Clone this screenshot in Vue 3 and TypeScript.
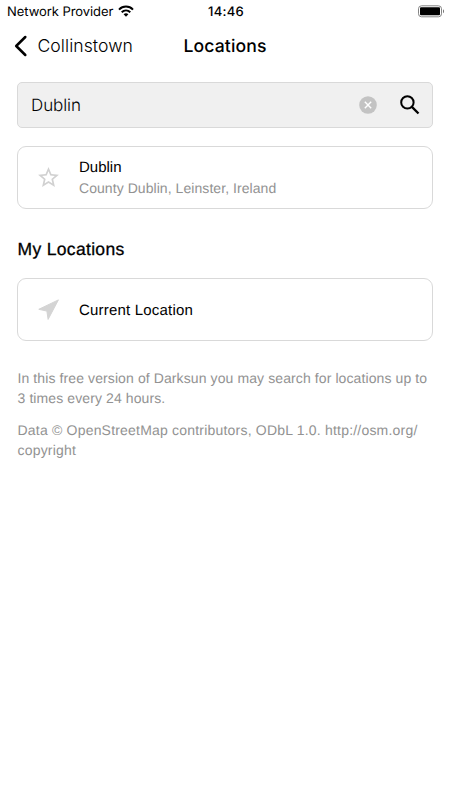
<script setup lang="ts">
import { ref } from 'vue'

interface Place {
  name: string
  region: string
}

const query = ref('Dublin')
const results: Place[] = [{ name: 'Dublin', region: 'County Dublin, Leinster, Ireland' }]
</script>

<template>
  <main class="screen">
    <div class="status">
      <div class="carrier">
        <span class="provider">Network Provider</span>
        <svg class="wifi" viewBox="0 0 16 12" width="16" height="12">
          <path d="M1 4.6C4.9.6 11.1.6 15 4.6M3.7 7.2c2.5-2.4 6.1-2.4 8.6 0" fill="none" stroke="#000" stroke-width="2" />
          <path d="M5.6 9.3c1.4-1.3 3.4-1.3 4.8 0L8 11.7z" />
        </svg>
      </div>
      <span class="clock">14:46</span>
      <svg class="battery" viewBox="0 0 27 13" width="27" height="13">
        <rect x=".5" y=".8" width="23" height="11" rx="3" fill="none" stroke="#858585" />
        <rect x="2" y="2.3" width="20" height="8" rx="1" />
        <path d="M25 4.3c1.4.7 1.4 3.3 0 4z" fill="#777" />
      </svg>
    </div>

    <header class="nav">
      <button class="back" type="button">
        <svg viewBox="0 0 14 22" width="14" height="22">
          <path d="M11.3 2 2.2 11l9.1 9" fill="none" stroke="#000" stroke-width="2.5" stroke-linecap="round" stroke-linejoin="round" />
        </svg>
        <span class="back-label">Collinstown</span>
      </button>
      <h1><span>Locations</span></h1>
    </header>

    <div class="search">
      <span class="query">{{ query }}</span>
      <svg class="clear" viewBox="0 0 18 18" width="18" height="18">
        <circle cx="9" cy="9" r="8.8" fill="#c3c3c3" />
        <path d="m5.8 5.8 6.4 6.4m0-6.4-6.4 6.4" stroke="#fff" stroke-width="1.4" />
      </svg>
      <svg class="find" viewBox="0 0 20 20" width="20" height="20">
        <circle cx="7.4" cy="7.4" r="6.2" fill="none" stroke="#000" stroke-width="2" />
        <path d="m11.9 11.9 6.6 6.6" stroke="#000" stroke-width="2.3" />
      </svg>
    </div>

    <article v-for="place in results" :key="place.region" class="card result">
      <svg class="icon" viewBox="0 0 24 24" width="25" height="25">
        <path fill="#d1d1d1" d="m22 9.24-7.19-.62L12 2 9.19 8.63 2 9.24l5.46 4.73L5.82 21 12 17.27 18.18 21l-1.63-7.03zM12 15.4l-3.76 2.27 1-4.28-3.32-2.88 4.38-.38L12 6.1l1.71 4.04 4.38.38-3.32 2.88 1 4.28z" />
      </svg>
      <div class="text">
        <span class="name">{{ place.name }}</span>
        <span class="region">{{ place.region }}</span>
      </div>
    </article>

    <h2><span>My Locations</span></h2>

    <article class="card">
      <svg class="icon" viewBox="0 0 25 25" width="25" height="25">
        <path fill="#d4d4d4" stroke="#d4d4d4" stroke-width="1" stroke-linejoin="round" d="M22.4 2.9 2.8 12.3l8.1 1.8 1.2 8.3z" />
      </svg>
      <div class="text">
        <span class="current">Current Location</span>
      </div>
    </article>

    <footer>
      <p><span class="limit">In this free version of Darksun you may search for locations up to</span><br /><span class="limit">3 times every 24 hours.</span></p>
      <p><span class="credit">Data © OpenStreetMap contributors, ODbL 1.0. http://osm.org/</span><br /><span class="credit">copyright</span></p>
    </footer>
  </main>
</template>

<style>
body {
  background: #fff;
}
</style>

<style scoped>
.screen {
  box-sizing: border-box;
  width: 450px;
  height: 800px;
  overflow: hidden;
  background: #fff;
  color: #000;
  font-family: "Liberation Sans", Arial, sans-serif;
  text-rendering: geometricPrecision;
}
.screen * {
  box-sizing: border-box;
}
.screen span {
  white-space: nowrap;
}
svg {
  display: block;
  flex: none;
}
.status {
  display: grid;
  grid-template-columns: 1fr auto 1fr;
  align-items: center;
  height: 23px;
  padding: 0 5px 0 7px;
  font: 400 13px/23px Inter, sans-serif;
}
.carrier {
  display: flex;
  align-items: center;
  gap: 5px;
}
.provider,
.clock {
  padding-top: 1px;
}
.provider {
  letter-spacing: -0.06px;
}
.wifi {
  margin-top: -2px;
}
.clock {
  font-weight: 500;
  letter-spacing: 0.3px;
}
.battery {
  justify-self: end;
  margin-top: -1px;
}
.nav {
  display: grid;
  grid-template-columns: 1fr auto 1fr;
  align-items: center;
  height: 46px;
  padding: 0 14px;
}
.back {
  display: flex;
  align-items: center;
  gap: 9.5px;
  padding: 0;
  border: 0;
  background: none;
  color: #000;
  font: 300 17.6px/24px Inter, sans-serif;
  letter-spacing: 0.05px;
}
h1 {
  margin: 0;
  padding-top: 2px;
  font: 500 17.6px/24px Inter, sans-serif;
  letter-spacing: 0.12px;
}
.search {
  display: flex;
  align-items: center;
  height: 46px;
  margin: 13px 17px 0;
  padding: 0 12px 0 13px;
  border: 1px solid #d9d9d9;
  border-radius: 5px;
  background: #f0f0f0;
}
.query {
  flex: 1;
  padding-top: 2px;
  font: 300 17px/24px Inter, sans-serif;
  letter-spacing: -0.1px;
}
.find {
  margin-left: 23px;
}
.card {
  display: flex;
  align-items: center;
  gap: 18px;
  height: 63px;
  margin: 0 17px;
  padding-left: 18px;
  border: 1px solid #d9d9d9;
  border-radius: 9px;
}
.result {
  margin-top: 18px;
}
.text {
  display: flex;
  flex-direction: column;
  padding-top: 1px;
  font-size: 15px;
  line-height: 21px;
}
.name {
  font-size: 15px;
}
.region {
  color: #929292;
  font-size: 14px;
  letter-spacing: 0.06px;
}
.current {
  padding-top: 1px;
  letter-spacing: 0.2px;
}
h2 {
  margin: 29px 17.5px 18px;
  font-size: 17.5px;
  font-weight: 400;
  line-height: 22px;
  letter-spacing: 0.33px;
  -webkit-text-stroke: 0.3px #000;
}
footer {
  margin: 27px 17.5px 0;
  color: #929292;
  font-size: 14px;
  line-height: 20px;
}
p {
  margin: 0 0 12px;
}
.limit {
  letter-spacing: 0.1px;
}
.credit {
  letter-spacing: 0.2px;
}
</style>
